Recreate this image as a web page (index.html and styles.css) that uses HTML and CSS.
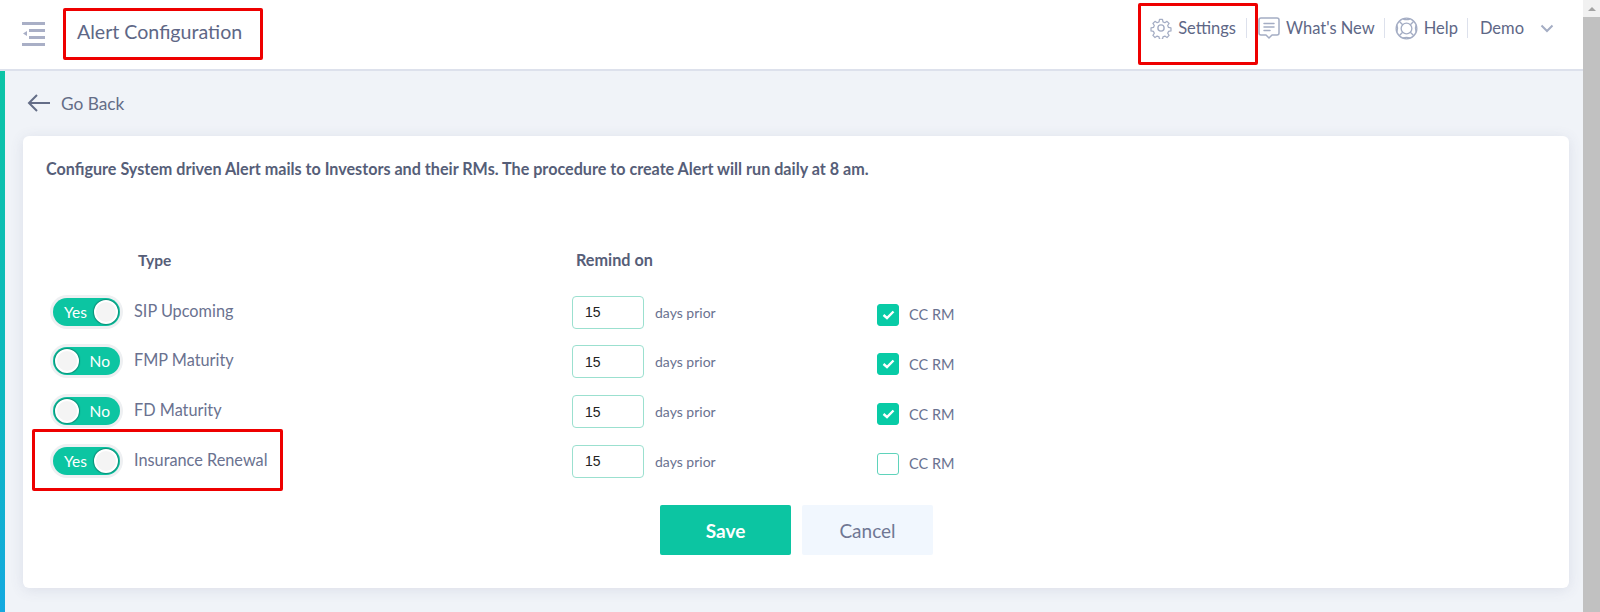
FILE: index.html
```html
<!DOCTYPE html>
<html lang="en">
<head>
    <meta charset="UTF-8">
    <meta name="viewport" content="width=device-width, initial-scale=1.0">
    <title>Alert Configuration</title>
    <link rel="stylesheet" href="styles.css">
</head>
<body>
    <div class="page">
        <header class="topbar">
            <svg class="menu-icon" width="24" height="24" viewBox="0 0 24 24">
                <rect x="0" y="0" width="23" height="3" fill="#a9afc6"/>
                <rect x="7" y="7" width="16" height="3" fill="#a9afc6"/>
                <rect x="7" y="14" width="16" height="3" fill="#a9afc6"/>
                <rect x="0" y="21" width="23" height="3" fill="#a9afc6"/>
                <path d="M1 11.5 L5 9 V14 Z" fill="#a9afc6"/>
            </svg>
            <div class="page-title"><span>Alert Configuration</span></div>
            <nav class="top-links">
                <a class="top-link boxed">
                    <svg width="22" height="22" viewBox="0 0 24 24" fill="none" stroke="#a4adc4" stroke-width="1.5" stroke-linejoin="round">
                        <circle cx="12" cy="12" r="3.4"/>
                        <path d="M10.2 1.6h3.6l.6 3 2.3 1 2.6-1.7 2.5 2.6-1.7 2.5 1 2.3 3 .6v3.6l-3 .6-1 2.3 1.7 2.6-2.5 2.5-2.6-1.7-2.3 1-.6 3h-3.6l-.6-3-2.3-1-2.6 1.7-2.5-2.5 1.7-2.6-1-2.3-3-.6v-3.6l3-.6 1-2.3-1.7-2.5 2.5-2.6 2.6 1.7 2.3-1z" transform="translate(1.2 1.2) scale(.9)"/>
                    </svg>
                    Settings
                </a>
                <a class="top-link">
                    <svg width="22" height="22" viewBox="0 0 22 22" fill="none" stroke="#a4adc4" stroke-width="1.5" stroke-linejoin="round">
                        <path d="M3 1h16a2 2 0 0 1 2 2v13a2 2 0 0 1-2 2h-5l-3 3-3-3H3a2 2 0 0 1-2-2V3a2 2 0 0 1 2-2z"/>
                        <path d="M6 6.5h10M6 10h10M6 13.5h6" stroke-linecap="round"/>
                    </svg>
                    What's New
                </a>
                <a class="top-link">
                    <svg width="23" height="23" viewBox="0 0 24 24" fill="none" stroke="#a4adc4" stroke-width="1.4">
                        <circle cx="12" cy="12" r="10.8"/>
                        <circle cx="12" cy="12" r="5.6"/>
                        <path d="M4.4 4.4 L8 8M19.6 4.4 L16 8M4.4 19.6 L8 16M19.6 19.6 L16 16"/>
                        <path d="M8.2 1.9 Q12 3.6 15.8 1.9M22.1 8.2 Q20.4 12 22.1 15.8M8.2 22.1 Q12 20.4 15.8 22.1M1.9 8.2 Q3.6 12 1.9 15.8"/>
                    </svg>
                    Help
                </a>
                <a class="top-link">Demo</a>
                <svg class="chevron" width="14" height="9" viewBox="0 0 14 9" fill="none" stroke="#a4adc4" stroke-width="2">
                    <path d="M1.5 1.5 L7 7 L12.5 1.5"/>
                </svg>
            </nav>
        </header>

        <main class="content">
            <a class="go-back">
                <svg width="24" height="18" viewBox="0 0 24 18" fill="none" stroke="#646d87" stroke-width="2">
                    <path d="M23 9H2M10 1 L2 9 L10 17"/>
                </svg>
                Go Back
            </a>

            <section class="card">
                <p class="intro">Configure System driven Alert mails to Investors and their RMs. The procedure to create Alert will run daily at 8 am.</p>

                <div class="alert-grid">
                    <div class="col-head type-head">Type</div>
                    <div class="col-head remind-head">Remind on</div>
                    <div></div>

                    <div class="type-cell">
                        <span class="toggle on"><span class="toggle-text">Yes</span><span class="knob"></span></span>
                        <span class="type-name">SIP Upcoming</span>
                    </div>
                    <div class="remind-cell"><input class="days" type="text" value="15"><span class="prior">days prior</span></div>
                    <label class="cc"><span class="check checked"><svg width="13" height="10" viewBox="0 0 13 10" fill="none" stroke="#fff" stroke-width="2.4"><path d="M1.5 5 L5 8 L11.5 1.5"/></svg></span>CC RM</label>

                    <div class="type-cell">
                        <span class="toggle off"><span class="knob"></span><span class="toggle-text">No</span></span>
                        <span class="type-name">FMP Maturity</span>
                    </div>
                    <div class="remind-cell"><input class="days" type="text" value="15"><span class="prior">days prior</span></div>
                    <label class="cc"><span class="check checked"><svg width="13" height="10" viewBox="0 0 13 10" fill="none" stroke="#fff" stroke-width="2.4"><path d="M1.5 5 L5 8 L11.5 1.5"/></svg></span>CC RM</label>

                    <div class="type-cell">
                        <span class="toggle off"><span class="knob"></span><span class="toggle-text">No</span></span>
                        <span class="type-name">FD Maturity</span>
                    </div>
                    <div class="remind-cell"><input class="days" type="text" value="15"><span class="prior">days prior</span></div>
                    <label class="cc"><span class="check checked"><svg width="13" height="10" viewBox="0 0 13 10" fill="none" stroke="#fff" stroke-width="2.4"><path d="M1.5 5 L5 8 L11.5 1.5"/></svg></span>CC RM</label>

                    <div class="type-cell boxed-row">
                        <span class="toggle on"><span class="toggle-text">Yes</span><span class="knob"></span></span>
                        <span class="type-name">Insurance Renewal</span>
                    </div>
                    <div class="remind-cell"><input class="days" type="text" value="15"><span class="prior">days prior</span></div>
                    <label class="cc"><span class="check"></span>CC RM</label>
                </div>

                <div class="actions">
                    <button class="btn btn-save">Save</button>
                    <button class="btn btn-cancel">Cancel</button>
                </div>
            </section>
        </main>
    </div>

    <div class="scrollbar">
        <div class="scroll-arrow"></div>
        <div class="scroll-thumb"></div>
    </div>
</body>
</html>
```

FILE: styles.css
```css
*, *::after {
    box-sizing: border-box;
}
html, body {
    height: 100%;
}
body {
    margin: 0;
    display: flex;
    overflow: hidden;
    font-family: 'Lato', sans-serif;
    color: #5c6480;
    background-color: #f0f3f8;
}
.page {
    flex: 1;
    min-width: 0;
    display: flex;
    flex-direction: column;
}

/* barra de cima */
.topbar {
    height: 71px;
    flex-shrink: 0;
    display: flex;
    padding-left: 22px;
    background-color: #fff;
    border-bottom: 2px solid #dde1ec;
}
.menu-icon {
    margin-top: 22px;
}
.page-title {
    height: 52px;
    width: 200px;
    margin: 8px 0 0 17px;
    padding: 7px 0 0 11px;
    border: 3px solid #ee0000;
    border-radius: 2px;
    font-size: 19.6px;
    line-height: 28px;
    color: #5e6786;
}
.top-links {
    margin-left: auto;
    display: flex;
    align-items: flex-start;
    padding: 4px 29px 0 0;
}
.top-link {
    display: flex;
    align-items: center;
    gap: 6px;
    height: 20px;
    margin-top: 14px;
    padding: 0 9px 0 12px;
    font-size: 16.5px;
    color: #5e6786;
    border-right: 1px solid #dde1ec;
}
.top-link svg {
    flex-shrink: 0;
}
.top-link:nth-child(2) {
    padding-left: 11px;
}
.top-link:nth-child(3) {
    padding-left: 10px;
}
.top-link:nth-child(4) {
    border-right: none;
    padding-right: 14px;
}
.top-link.boxed {
    position: relative;
    padding-left: 13px;
    padding-right: 10px;
}
.top-link.boxed::after {
    content: '';
    position: absolute;
    left: 1px;
    top: -15px;
    width: 120px;
    height: 62px;
    border: 3px solid #ee0000;
    border-radius: 2px;
    pointer-events: none;
}
.chevron {
    margin: 20px 0 0 2px;
}

/* conteudo */
.content {
    flex: 1;
    display: flex;
    flex-direction: column;
    padding: 21px 14px 24px 18px;
    border-left: 5px solid transparent;
    border-image: linear-gradient(to bottom, #0cc4a6, #0cb8c0 60%, #14a9e0) 1;
}
.go-back {
    display: flex;
    align-items: center;
    gap: 10px;
    height: 22px;
    margin-left: 4px;
    font-size: 17.3px;
    color: #646d87;
}
.card {
    flex: 1;
    margin-top: 22px;
    padding: 23px 23px;
    background-color: #fff;
    border-radius: 6px;
    box-shadow: 0 2px 14px rgba(70, 80, 120, 0.12);
}
.intro {
    margin: 0;
    font-size: 16.15px;
    font-weight: 700;
    line-height: 20px;
    color: #565e78;
}
.alert-grid {
    display: grid;
    grid-template-columns: 526px 305px 1fr;
    grid-auto-rows: 49.7px;
    margin-top: 61px;
    height: 240px;
}
.col-head {
    font-size: 15.5px;
    font-weight: 700;
    color: #565e78;
    line-height: 40px;
}
.type-head {
    padding-left: 92px;
}
.remind-head {
    padding-left: 4px;
    font-size: 16.2px;
}
.type-cell {
    display: flex;
    align-items: center;
    height: 36px;
    margin-top: 4px;
    padding-left: 7px;
}
.type-name {
    margin: -3px 0 0 14px;
    font-size: 16.3px;
    color: #6a7290;
}
.boxed-row {
    position: relative;
}
.boxed-row::after {
    content: '';
    position: absolute;
    left: -14px;
    top: -14px;
    width: 251px;
    height: 62px;
    border: 3px solid #ee0000;
    border-radius: 2px;
    pointer-events: none;
}

/* toggle */
.toggle {
    display: flex;
    align-items: center;
    justify-content: space-between;
    width: 67px;
    height: 28px;
    padding: 0 2px;
    border-radius: 14px;
    background-color: #0cc5a2;
    box-shadow: 0 0 0 3px #eef0f2;
    flex-shrink: 0;
}
.toggle-text {
    font-size: 15.5px;
    color: #fff;
    padding: 0 4px 0 9px;
}
.toggle.off .toggle-text {
    padding: 0 8px 0 0;
}
.knob {
    width: 24px;
    height: 24px;
    border-radius: 50%;
    background-color: #f4f4f4;
    border: 2px solid #fff;
    box-shadow: 0 0 1px 1px #0a8f78;
}

/* dias */
.remind-cell {
    display: flex;
    align-items: center;
    height: 33px;
    margin-top: 6px;
}
.days {
    width: 72px;
    height: 33px;
    padding: 0 12px;
    font-family: 'Liberation Sans', sans-serif;
    font-size: 14px;
    color: #222;
    border: 1px solid #9be0cf;
    border-radius: 4px;
    outline: none;
}
.prior {
    margin-left: 11px;
    font-size: 14px;
    color: #6a7290;
}
.cc {
    display: flex;
    align-items: center;
    gap: 10px;
    height: 22px;
    margin-top: 14px;
    font-size: 14.5px;
    color: #6a7290;
}
.check {
    width: 22px;
    height: 22px;
    display: flex;
    align-items: center;
    justify-content: center;
    border: 1px solid #5fd3bb;
    border-radius: 3px;
}
.check.checked {
    background-color: #08cba6;
    border-color: #08cba6;
}

/* botoes */
.actions {
    display: flex;
    justify-content: center;
    gap: 11px;
    margin: 25px 0 0 1px;
}
.btn {
    width: 131px;
    height: 50px;
    border: none;
    border-radius: 2px;
    font-family: 'Lato', sans-serif;
    font-size: 19px;
}
.btn-save {
    background-color: #0cc5a2;
    color: #fff;
    font-weight: 700;
}
.btn-cancel {
    background-color: #f1f7fe;
    color: #6f7794;
}

/* barra de rolagem */
.scrollbar {
    width: 17px;
    flex-shrink: 0;
    display: flex;
    flex-direction: column;
    background-color: #f1f1f1;
}
.scroll-arrow {
    height: 17px;
    flex-shrink: 0;
    display: flex;
    align-items: center;
    justify-content: center;
}
.scroll-arrow::after {
    content: '';
    border-left: 4px solid transparent;
    border-right: 4px solid transparent;
    border-bottom: 4px solid #a3a3a3;
}
.scroll-thumb {
    flex: 1;
    background-color: #c1c1c1;
}
```
